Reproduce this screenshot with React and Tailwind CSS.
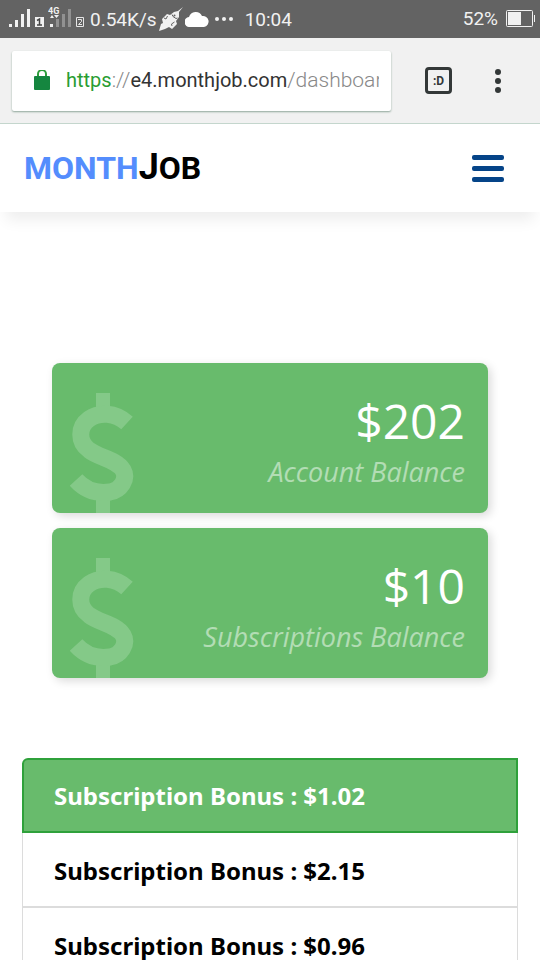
const balances = [
  { amount: '$202', label: 'Account Balance' },
  { amount: '$10', label: 'Subscriptions Balance' },
];

const bonuses = ['$1.02', '$2.15', '$0.96'];

function SignalIcon() {
  return (
    <svg className="h-5 w-9" viewBox="0 0 36 20" fill="#f1f1f1" aria-hidden="true">
      <path d="M1 15h3v3H1zM7 11h3v7H7zM13 5h3v13h-3zM19 0h3v18h-3z" />
      <path d="M27 8h9v10h-9z" />
      <path fill="none" stroke="#444" strokeWidth="1.500" d="M29 11.500l2.500-1.500v6M29 16h5" />
    </svg>
  );
}

function SecondSignalIcon() {
  return (
    <svg className="h-6 w-9" viewBox="0 0 36 24" fill="#f1f1f1" aria-hidden="true">
      <text x="0" y="10" fontSize="9" fontFamily="Roboto, sans-serif" fontWeight="700">
        4G
      </text>
      <path d="M2 20h3v3H2zM2 14l2-3 2 3zM6 11h5l-2.500 3z" />
      <path fill="#919191" d="M8 15h3v8H8zM14 10h3v13h-3zM20 5h3v18h-3z" />
      <path fill="none" stroke="#e5e5e5" d="M28.500 13.500h7v9h-7z" />
      <path fill="none" stroke="#e5e5e5" d="M30 15.500h3.500v2L30.500 20.500h3.500" />
    </svg>
  );
}

function RocketIcon() {
  return (
    <svg className="h-6 w-6" viewBox="0 0 24 24" fill="#f1f1f1" aria-hidden="true">
      <path d="M0 24l2-7 2-1-1-4 5-5 3 1 4-3 4-1 5-4-4 5v5l-3 4 1 3-5 5-3-2-4 2z" />
      <path
        fill="none"
        stroke="#636363"
        d="M13 7.500l1 2 3 2 1.500-.5M5 11l2 1 1.500-3M13 19l-.5-2 3-2"
      />
      <circle cx="15.500" cy="8.500" r="1" fill="#636363" />
    </svg>
  );
}

function CloudIcon() {
  return (
    <svg className="h-4 w-6" viewBox="0 0 24 16" fill="white" aria-hidden="true">
      <path d="M5 16a5 5 0 0 1-1-10 7 7 0 0 1 13-1 5.500 5.500 0 0 1 2 11z" />
    </svg>
  );
}

function StatusBar() {
  return (
    <div className="flex h-[38px] items-center bg-[#636363] pr-1 pl-2 font-[Roboto,sans-serif] text-[19px] text-[#f1f1f1]">
      <SignalIcon />
      <div className="ml-1 self-start pt-1">
        <SecondSignalIcon />
      </div>
      <span className="ml-1.5 pt-0.5">0.54K/s</span>
      <div className="ml-0.5">
        <RocketIcon />
      </div>
      <div className="ml-0.5">
        <CloudIcon />
      </div>
      <svg className="ml-1.5 h-1 w-5" viewBox="0 0 20 4" fill="#f1f1f1" aria-hidden="true">
        <circle cx="2" cy="2" r="2" />
        <circle cx="9" cy="2" r="2" />
        <circle cx="16" cy="2" r="2" />
      </svg>
      <span className="ml-2.5 pt-0.5">10:04</span>
      <span className="ml-auto">52%</span>
      <svg className="ml-2 h-[18px] w-[30px]" viewBox="0 0 30 18" aria-hidden="true">
        <rect x="0.500" y="0.500" width="26" height="16" rx="1" fill="none" stroke="#f1f1f1" />
        <path fill="#f1f1f1" d="M2 2h13v13H2zM28 5h1v7h-1z" />
      </svg>
    </div>
  );
}

function AddressBar() {
  return (
    <div className="flex h-[86px] items-center border-b border-[#c4d6cd] bg-[#f1f1f1] pr-8 pl-3 font-[Roboto,sans-serif]">
      <button
        type="button"
        aria-label="Edit address"
        className="flex h-[60px] min-w-0 flex-1 items-center rounded-xs bg-white pr-3 pl-[22px] text-left text-xl shadow-[0_1px_2px_#8fa69a]"
      >
        <svg className="h-[22px] w-4 shrink-0" viewBox="0 0 16 22" aria-hidden="true">
          <path fill="none" stroke="#2d9d3a" strokeWidth="2" d="M4 8V4a4 4 0 0 1 8 0v4" />
          <rect y="6" width="16" height="14" rx="1" fill="#15863f" />
        </svg>
        <span className="ml-4 min-w-0 overflow-hidden whitespace-nowrap text-[#333]">
          <span className="text-[#2a9d32]">https</span>
          <span className="text-[21px] font-light text-[#888]">://</span>
          e4.monthjob.com
          <span className="text-[21px] font-light text-[#888]">/dashboar</span>
        </span>
      </button>
      <button
        type="button"
        aria-label="Tabs"
        className="ml-[34px] flex size-[27px] items-center justify-center rounded-sm border-3 border-[#333838] text-xs font-bold text-[#333838]"
      >
        :D
      </button>
      <button type="button" aria-label="More options" className="ml-9 flex w-5 justify-center">
        <svg className="h-6 w-1.5" viewBox="0 0 6 24" fill="#333838">
          <circle cx="3" cy="3" r="3" />
          <circle cx="3" cy="12" r="3" />
          <circle cx="3" cy="21" r="3" />
        </svg>
      </button>
    </div>
  );
}

function SiteHeader() {
  return (
    <header className="flex h-[88px] items-center justify-between bg-white pr-9 pl-6 shadow-[0_14px_14px_-6px_#00000012]">
      <a
        href="#"
        className="flex items-baseline font-[Roboto,sans-serif] text-[32px] font-bold text-black"
      >
        <span className="text-[#548dfd]">MONTH</span>
        <span className="text-4xl">J</span>
        <span>OB</span>
      </a>
      <button type="button" aria-label="Menu" className="flex w-8 flex-col gap-1.5">
        <span className="h-[5px] rounded-xs bg-[#054488]" />
        <span className="h-[5px] rounded-xs bg-[#054488]" />
        <span className="h-[5px] rounded-xs bg-[#054488]" />
      </button>
    </header>
  );
}

function BalanceCard({ amount, label }) {
  return (
    <section className="relative h-[150px] overflow-hidden rounded-lg bg-[#68bb6c] px-[23px] pt-6 text-right font-['Open_Sans',sans-serif] text-white shadow-[3px_3px_10px_#00000026]">
      <svg className="absolute top-[30px] left-[18px] h-[120px] w-16" viewBox="0 0 64 120" aria-hidden="true">
        <g fill="none" stroke="#84c988">
          <path strokeWidth="14" d="M33 0v20M33 104v16" />
          <path
            strokeWidth="17"
            d="M57 30C45 19 29 19 19 26C8 34 8 49 19 57C29 65 46 66 53 77C58 86 51 97 40 99C27 101 15 97 6 87"
          />
        </g>
      </svg>
      <p className="text-5xl leading-[68px]">{amount}</p>
      <p className="text-[27px] leading-[34px] text-white/50 italic">{label}</p>
    </section>
  );
}

export default function App() {
  return (
    <div className="h-screen overflow-hidden bg-white font-['Noto_Sans',sans-serif]">
      <StatusBar />
      <AddressBar />
      <SiteHeader />
      <main className="pt-[151px]">
        <div className="flex flex-col gap-[15px] px-[52px]">
          {balances.map((b) => (
            <BalanceCard key={b.label} {...b} />
          ))}
        </div>
        <ul className="mx-[22px] mt-20 text-2xl font-bold text-black">
          {bonuses.map((bonus, i) => (
            <li
              key={bonus}
              className={`flex h-[75px] items-center ${
                i === 0
                  ? 'rounded-tl-md border-2 border-[#2fa13b] bg-[#68bb6c] px-[30px] text-white'
                  : 'border-x border-b-2 border-[#dcdcdc] px-[31px] pt-0.5'
              }`}
            >
              Subscription Bonus : {bonus}
            </li>
          ))}
        </ul>
      </main>
    </div>
  );
}
